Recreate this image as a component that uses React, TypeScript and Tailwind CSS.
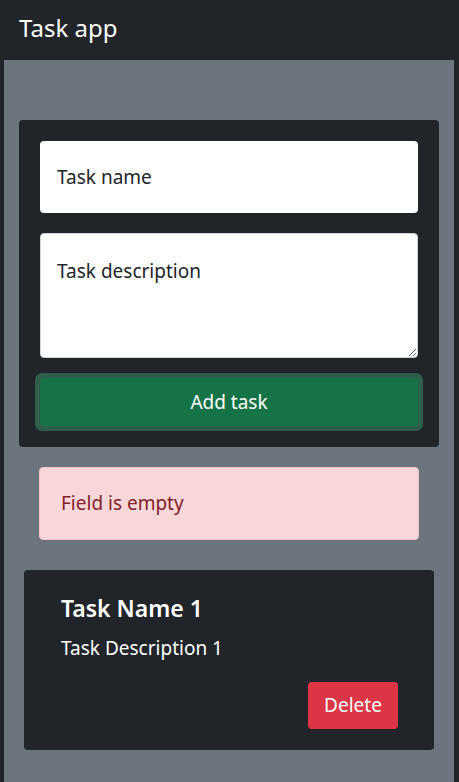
import React, { useState } from 'react';

interface Task {
  id: number;
  name: string;
  description: string;
}

const App: React.FC = () => {
  const [tasks, setTasks] = useState<Task[]>([
    { id: 1, name: 'Task Name 1', description: 'Task Description 1' },
  ]);
  const [name, setName] = useState('');
  const [description, setDescription] = useState('');
  const [error] = useState('Field is empty');

  const handleDelete = (id: number) => {
    setTasks((prev) => prev.filter((t) => t.id !== id));
  };

  return (
    <div
      className="min-h-screen bg-[#212529] flex flex-col"
      style={{ fontFamily: '"Noto Sans", "Open Sans", sans-serif' }}
    >
      {/* Navbar */}
      <header className="h-[60px] flex items-center px-[19px] pb-[4px] shrink-0">
        <h1 className="text-[24px] text-white leading-none">Task app</h1>
      </header>

      <main className="flex-1 ml-[4px] mr-[5px] bg-[#6c757d] pt-[60px] px-[15px] pb-8 flex flex-col">
        {/* Form */}
        <form
          onSubmit={(e) => e.preventDefault()}
          className="bg-[#212529] rounded p-[21px] pb-[16px] flex flex-col"
        >
          <input
            type="text"
            value={name}
            onChange={(e) => setName(e.target.value)}
            placeholder="Task name"
            className="h-[72px] w-full rounded bg-white px-[17px] text-[19px] text-[#212529] placeholder:text-[#212529] outline-none"
          />
          <textarea
            value={description}
            onChange={(e) => setDescription(e.target.value)}
            placeholder="Task description"
            className="mt-[20px] h-[125px] w-full rounded border border-[#ced4da] bg-white px-[16px] pt-[23px] text-[19px] leading-[1.5] text-[#212529] placeholder:text-[#212529] outline-none"
          />
          <div className="mt-[15px] -mx-[5px] h-[58px] rounded-[7px] bg-[#2e5e49] p-[5px]">
            <button
              type="submit"
              className="h-[48px] w-full rounded bg-[#157347] text-[19px] text-white"
            >
              Add task
            </button>
          </div>
        </form>

        {/* Alert */}
        {error && (
          <div className="mx-[20px] mt-[20px] h-[73px] rounded border border-[#f5c2c7] bg-[#f8d7da] px-[21px] flex items-center text-[19px] text-[#842029]">
            {error}
          </div>
        )}

        {/* Task list */}
        {tasks.map((task) => (
          <div
            key={task.id}
            className="mx-[5px] mt-[30px] h-[180px] rounded bg-[#212529] pl-[37px] pr-[36px] pt-[25px] flex flex-col"
          >
            <h4 className="text-[23px] font-semibold text-white leading-[1.2]">{task.name}</h4>
            <p className="mt-[11px] text-[19px] text-white leading-[1.5]">{task.description}</p>
            <div className="mt-[20px] flex justify-end">
              <button
                onClick={() => handleDelete(task.id)}
                className="h-[47px] w-[90px] rounded bg-[#dc3545] text-[19px] text-white"
              >
                Delete
              </button>
            </div>
          </div>
        ))}
      </main>
    </div>
  );
};

export default App;
